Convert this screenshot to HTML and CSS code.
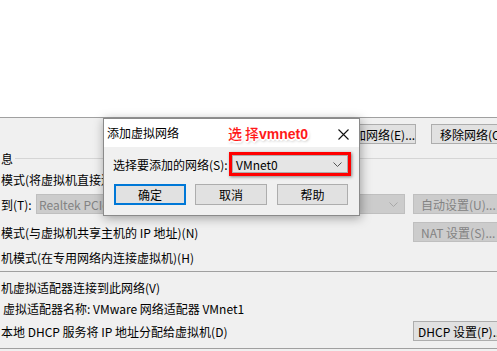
FILE: index.html
```html
<!DOCTYPE html>
<html lang="zh-CN">
<head>
<meta charset="utf-8">
<title>添加虚拟网络</title>
<link rel="stylesheet" href="styles.css">
</head>
<body>
<div class="win">
  <div class="list"></div>
  <div class="btnrow">
    <button class="btn add">添加网络(E)...</button>
    <button class="btn rm">移除网络(O)...</button>
  </div>
  <div class="grp"><span>息</span><div class="grpline"></div></div>
  <div class="row r1"><span class="txt">模式(将虚拟机直接连接到外部网络)(B)</span></div>
  <div class="row r2">
    <span class="lbl">到(T):</span>
    <div class="combo">
      <span>Realtek PCIe GbE Family Controller</span>
      <svg class="chev" width="9" height="5" viewBox="0 0 9 5"><path d="M0.5 0.5 L4.5 4.5 L8.5 0.5" fill="none" stroke="#a8a8a8" stroke-width="1"/></svg>
    </div>
    <button class="btn dis side">自动设置(U)...</button>
  </div>
  <div class="row r3"><span class="txt">模式(与虚拟机共享主机的 IP 地址)(N)</span><button class="btn dis side">NAT 设置(S)...</button></div>
  <div class="row r4"><span class="txt">机模式(在专用网络内连接虚拟机)(H)</span></div>
  <div class="sep s1"></div>
  <div class="row r5"><span class="txt">机虚拟适配器连接到此网络(V)</span></div>
  <div class="row r6"><span class="txt ind">虚拟适配器名称: VMware 网络适配器 VMnet1</span></div>
  <div class="row r7"><span class="txt">本地 DHCP 服务将 IP 地址分配给虚拟机(D)</span><button class="btn side dhcp">DHCP 设置(P)...</button></div>
  <div class="sep s2"></div>
</div>

<div class="dlg">
  <div class="dtitle">
    <span>添加虚拟网络</span>
    <svg class="close" width="11" height="11" viewBox="0 0 11 11"><path d="M0.5 0.5 L10.5 10.5 M10.5 0.5 L0.5 10.5" stroke="#111" stroke-width="1.1" fill="none"/></svg>
  </div>
  <div class="dbody">
    <div class="drow">
      <span class="dlbl">选择要添加的网络(S):</span>
      <div class="redbox">
        <div class="sel">
          <span>VMnet0</span>
          <svg class="chev2" width="9" height="5" viewBox="0 0 9 5"><path d="M0.5 0.5 L4.5 4.5 L8.5 0.5" fill="none" stroke="#555" stroke-width="1"/></svg>
        </div>
      </div>
    </div>
    <div class="dbtns">
      <button class="btn dbtn ok">确定</button>
      <button class="btn dbtn cancel">取消</button>
      <button class="btn dbtn help">帮助</button>
    </div>
  </div>
  <div class="ann"><span class="ann-cn sp">选</span><span class="ann-cn">择</span><span class="ann-en">vmnet0</span></div>
</div>
</body>
</html>
```
FILE: styles.css
```css
html, body {
  margin: 0;
  padding: 0;
}
body {
  width: 497px;
  height: 351px;
  overflow: hidden;
  position: relative;
  background: #f0f0f0;
  font-family: "Noto Sans CJK SC", sans-serif;
  font-size: 12px;
  color: #000;
}
.win {
  width: 503px;
}
.list {
  height: 117px;
  background: #fff;
  border-bottom: 1px solid #a0a0a0;
}
.btn {
  font-family: "Noto Sans CJK SC", sans-serif;
  font-size: 12px;
  height: 20px;
  box-sizing: border-box;
  background: #e1e1e1;
  border: 1px solid #adadad;
  padding: 0;
  margin: 0;
  line-height: 17px;
  color: #000;
  white-space: nowrap;
  flex: none;
  border-radius: 0;
}
.btnrow {
  display: flex;
  margin-top: 6px;
  height: 20px;
}
.add {
  margin-left: 341px;
  width: 75px;
}
.rm {
  margin-left: 15px;
  width: 90px;
  text-align: left;
  padding-left: 8px;
}
.grp {
  margin-top: 6px;
  height: 16px;
  display: flex;
  align-items: center;
  padding-left: 1px;
}
.grpline {
  flex: 1;
  margin-left: 2px;
  border-top: 1px solid #d5d5d5;
}
.row {
  display: flex;
  align-items: center;
  height: 20px;
  padding-left: 1px;
  white-space: nowrap;
}
.txt {
  flex: 1;
}
.ind {
  padding-left: 2px;
}
.r1 { margin-top: 3px; }
.r2 { margin-top: 5px; }
.r3 { margin-top: 8px; }
.r4 { margin-top: 5px; }
.r5 { margin-top: 5px; }
.r6 { margin-top: 1px; }
.r7 { margin-top: 3px; }
.lbl {
  width: 35px;
  flex: none;
}
.combo {
  width: 369px;
  height: 20px;
  box-sizing: border-box;
  flex: none;
  background: #cccccc;
  border: 1px solid #bfbfbf;
  color: #838383;
  display: flex;
  align-items: center;
  padding-left: 2px;
  padding-right: 6px;
  overflow: hidden;
}
.combo span {
  flex: 1;
  overflow: hidden;
}
.chev {
  flex: none;
}
.side {
  margin-left: 8px;
  width: 90px;
  text-align: left;
  padding-left: 7px;
}
.r3 .side, .r7 .side {
  margin-left: 0;
}
.dis {
  background: #cccccc;
  border-color: #bfbfbf;
  color: #838383;
}
.dhcp {
  padding-left: 4px;
}
.sep {
  border-top: 1px solid #a0a0a0;
}
.s1 { margin-top: 4px; }
.s2 { margin-top: 7px; }

/* dialog */
.dlg {
  position: absolute;
  left: 103px;
  top: 118px;
  width: 257px;
  height: 98px;
  box-sizing: border-box;
  border: 1px solid #8a8a8a;
  background: #f0f0f0;
  box-shadow: 1px 2px 10px rgba(0, 0, 0, 0.35);
}
.dtitle {
  height: 28px;
  background: #fff;
  display: flex;
  align-items: center;
  padding-left: 3px;
  padding-right: 10px;
}
.dtitle span {
  flex: 1;
  padding-bottom: 2px;
}
.close {
  flex: none;
  margin-top: 2px;
}
.dbody {
  padding: 5px 0 0 9px;
}
.drow {
  display: flex;
  align-items: center;
  height: 24px;
}
.dlbl {
  width: 116px;
  flex: none;
  white-space: nowrap;
}
.redbox {
  width: 122px;
  height: 24px;
  box-sizing: border-box;
  border: 3px solid #ff0000;
  box-shadow: 1px 1px 3px rgba(0, 0, 0, 0.45);
  display: flex;
}
.sel {
  flex: 1;
  background: #e5e5e5;
  border: 1px solid #acacac;
  display: flex;
  align-items: center;
  padding-left: 3px;
  padding-right: 5px;
}
.sel span {
  flex: 1;
}
.chev2 {
  flex: none;
}
.dbtns {
  display: flex;
  margin-top: 8px;
  padding-left: 1px;
}
.dbtn {
  width: 72px;
  height: 21px;
  text-align: center;
}
.cancel { margin-left: 9px; }
.help { margin-left: 10px; width: 71px; }
.ok {
  border: 2px solid #0078d7;
  line-height: 16px;
}
.ann {
  position: absolute;
  left: 124px;
  top: 5px;
  height: 18px;
  line-height: 18px;
  color: #ff1a1a;
  white-space: nowrap;
  text-shadow:
    -1px -1px 0 #fff, 1px -1px 0 #fff, -1px 1px 0 #fff, 1px 1px 0 #fff,
    -2px 0 0 #fff, 2px 0 0 #fff, 0 -2px 0 #fff, 0 2px 0 #fff,
    1px 2px 3px rgba(0, 0, 0, 0.35);
}
.ann-cn {
  font-family: "Noto Sans CJK SC", sans-serif;
  font-size: 14px;
  font-weight: 500;
}
.sp {
  margin-right: 3px;
}
.ann-en {
  font-family: "Liberation Sans", Arial, sans-serif;
  font-weight: bold;
  font-size: 14px;
}
```
